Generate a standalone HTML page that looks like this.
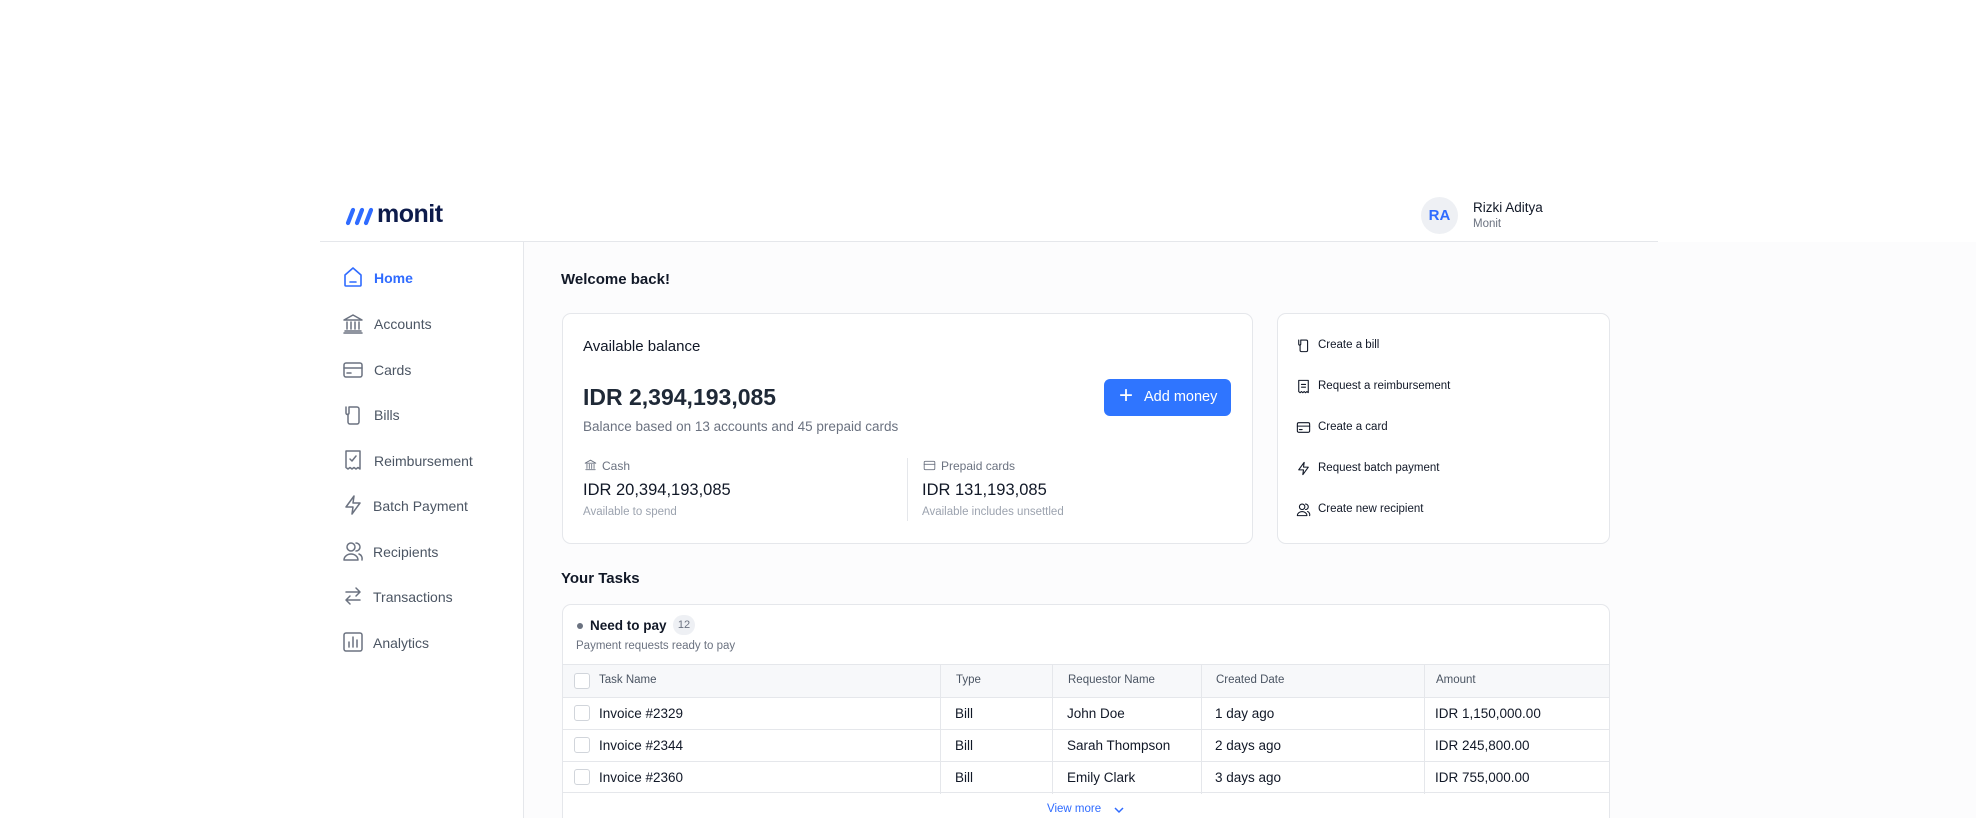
<!DOCTYPE html>
<html style="width:1976px;height:818px;overflow:hidden"><head><meta charset="utf-8"><style>
*{box-sizing:border-box;margin:0;padding:0}
body{width:1976px;height:818px;overflow:hidden;background:#fff;font-family:"Liberation Sans",sans-serif;color:#111827;position:relative}
.a{position:absolute;white-space:nowrap}
.nav{font-size:14px;color:#4b5563}
.g{color:#6b7280}
.card{position:absolute;border:1px solid #e5e7eb;border-radius:9px;background:#fff}
svg{position:absolute}
.ic{fill:none;stroke:#6b7280;stroke-width:1.5;stroke-linecap:round;stroke-linejoin:round}
.qi{fill:none;stroke:#111827;stroke-width:1.6;stroke-linecap:round;stroke-linejoin:round}
.cb{position:absolute;width:16px;height:16px;border:1px solid #d1d5db;border-radius:3px;background:#fff}
.row{position:absolute;left:0;width:1048px;height:32px;border-top:1px solid #e5e7eb;font-size:13.5px}
.row span{position:absolute;top:8px}
</style></head><body>
<div class="a" style="left:523px;top:242px;width:1453px;height:576px;background:#fcfcfd"></div>
<div class="a" style="left:320px;top:241px;width:1338px;height:1px;background:#e5e7eb"></div>
<div class="a" style="left:523px;top:242px;width:1px;height:576px;background:#e5e7eb"></div>
<svg style="left:345px;top:206px" width="30" height="20" viewBox="0 0 30 20"><g stroke="#2f6bff" stroke-width="4.2" stroke-linecap="round"><path d="M3 17 L8 4"/><path d="M12 17 L17 4"/><path d="M21 17 L26 4"/></g></svg>
<div class="a" style="left:377px;top:200px;font-size:25px;font-weight:bold;color:#0d1b4b;letter-spacing:-0.5px">monit</div>
<div class="a" style="left:1421px;top:197px;width:37px;height:37px;border-radius:50%;background:#eef0f4;color:#2f6bff;font-weight:bold;font-size:15px;text-align:center;line-height:37px">RA</div>
<div class="a" style="left:1473px;top:200px;font-size:13.5px;color:#111827">Rizki Aditya</div>
<div class="a" style="left:1473px;top:218px;font-size:11.5px"><span class="g">Monit</span></div>
<svg style="left:342px;top:266px" width="22" height="22" viewBox="0 0 22 22"><path d="M3 9 L11 2 L19 9 V19 a1 1 0 0 1-1 1 H4 a1 1 0 0 1-1-1Z M8 16 H14" fill="none" stroke="#2f6bff" stroke-width="1.6" stroke-linejoin="round" stroke-linecap="round"/></svg>
<div class="a nav" style="left:374px;top:270px;color:#2f6bff;font-weight:bold">Home</div>
<svg style="left:342px;top:313px" width="22" height="22" viewBox="0 0 22 22"><path class="ic" d="M2 7 L11 2 L20 7 Z M3 7H19 M5 9V16 M9 9V16 M13 9V16 M17 9V16 M3 18H19 M2 20H20"/></svg>
<div class="a nav" style="left:374px;top:316px">Accounts</div>
<svg style="left:342px;top:359px" width="22" height="22" viewBox="0 0 22 22"><rect class="ic" x="2" y="4" width="18" height="14" rx="2"/><path class="ic" d="M2 9H20 M5 14H9"/></svg>
<div class="a nav" style="left:374px;top:362px">Cards</div>
<svg style="left:342px;top:404px" width="22" height="22" viewBox="0 0 22 22"><path class="ic" d="M7 3 H15 a2 2 0 0 1 2 2 V18 a2 2 0 0 1-2 2 H8 a2 2 0 0 1-2-2 V10 M4 3 V9 a1.5 1.5 0 0 0 3 0 V3"/></svg>
<div class="a nav" style="left:374px;top:407px">Bills</div>
<svg style="left:342px;top:449px" width="22" height="22" viewBox="0 0 22 22"><path class="ic" d="M4 2 H18 V20 L16 18.5 L14 20 L12 18.5 L10 20 L8 18.5 L6 20 L4 18.5Z M8 10 L10 12 L14 7"/></svg>
<div class="a nav" style="left:374px;top:453px">Reimbursement</div>
<svg style="left:342px;top:494px" width="22" height="22" viewBox="0 0 22 22"><path class="ic" d="M12 2 L4 13 H11 L10 20 L18 9 H11 Z"/></svg>
<div class="a nav" style="left:373px;top:498px">Batch Payment</div>
<svg style="left:342px;top:540px" width="22" height="22" viewBox="0 0 22 22"><circle class="ic" cx="9" cy="7" r="4"/><path class="ic" d="M2 20 a7 6 0 0 1 14 0 Z M14 3 a4 4 0 0 1 0 8 M17 14 a5 5 0 0 1 3 6"/></svg>
<div class="a nav" style="left:373px;top:544px">Recipients</div>
<svg style="left:342px;top:585px" width="22" height="22" viewBox="0 0 22 22"><path class="ic" d="M4 7 H18 M14 3 L18 7 L14 11 M18 15 H4 M8 11 L4 15 L8 19"/></svg>
<div class="a nav" style="left:373px;top:589px">Transactions</div>
<svg style="left:342px;top:631px" width="22" height="22" viewBox="0 0 22 22"><rect class="ic" x="2" y="2" width="18" height="18" rx="2"/><path class="ic" d="M7 16V11 M11 16V6 M15 16V9"/></svg>
<div class="a nav" style="left:373px;top:635px">Analytics</div>
<div class="a" style="left:561px;top:271px;font-size:15px;font-weight:bold;color:#111827">Welcome back!</div>
<div class="card" style="left:562px;top:313px;width:691px;height:231px"></div>
<div class="a" style="left:583px;top:338px;font-size:15px">Available balance</div>
<div class="a" style="left:583px;top:384px;font-size:23px;font-weight:bold;color:#1f2937">IDR 2,394,193,085</div>
<div class="a g" style="left:583px;top:419px;font-size:13.5px">Balance based on 13 accounts and 45 prepaid cards</div>
<div class="a" style="left:1104px;top:379px;width:127px;height:37px;border-radius:6px;background:#2f75ff;color:#fff;font-size:14.5px;line-height:37px;padding-left:40px">Add money</div>
<div class="a" style="left:1119px;top:377px;color:#fff;font-size:24px;line-height:37px">+</div>
<svg style="left:584px;top:459px" width="13" height="13" viewBox="0 0 22 22"><path class="ic" d="M2 7 L11 2 L20 7 Z M5 9V16 M9 9V16 M13 9V16 M17 9V16 M3 18H19"/></svg>
<div class="a g" style="left:602px;top:459px;font-size:12px">Cash</div>
<div class="a" style="left:583px;top:481px;font-size:16.5px">IDR 20,394,193,085</div>
<div class="a" style="left:583px;top:506px;font-size:11.5px;color:#9ca3af">Available to spend</div>
<div class="a" style="left:907px;top:458px;width:1px;height:63px;background:#e5e7eb"></div>
<svg style="left:923px;top:459px" width="13" height="13" viewBox="0 0 22 22"><rect class="ic" x="2" y="4" width="18" height="14" rx="2"/><path class="ic" d="M2 9H20"/></svg>
<div class="a g" style="left:941px;top:459px;font-size:12px">Prepaid cards</div>
<div class="a" style="left:922px;top:481px;font-size:16.5px">IDR 131,193,085</div>
<div class="a" style="left:922px;top:506px;font-size:11.5px;color:#9ca3af">Available includes unsettled</div>
<div class="card" style="left:1277px;top:313px;width:333px;height:231px"></div>
<svg style="left:1296px;top:338px" width="15" height="15" viewBox="0 0 22 22"><path class="qi" d="M7 3 H15 a2 2 0 0 1 2 2 V18 a2 2 0 0 1-2 2 H8 a2 2 0 0 1-2-2 V10 M4 3 V9 a1.5 1.5 0 0 0 3 0 V3"/></svg>
<div class="a" style="left:1318px;top:339px;font-size:11.5px">Create a bill</div>
<svg style="left:1296px;top:379px" width="15" height="15" viewBox="0 0 22 22"><path class="qi" d="M4 2 H18 V20 L16 18.5 L14 20 L12 18.5 L10 20 L8 18.5 L6 20 L4 18.5Z M8 8H14 M8 12H14"/></svg>
<div class="a" style="left:1318px;top:380px;font-size:11.5px">Request a reimbursement</div>
<svg style="left:1296px;top:420px" width="15" height="15" viewBox="0 0 22 22"><rect class="qi" x="2" y="4" width="18" height="14" rx="2"/><path class="qi" d="M2 9H20 M5 14H9"/></svg>
<div class="a" style="left:1318px;top:421px;font-size:11.5px">Create a card</div>
<svg style="left:1296px;top:461px" width="15" height="15" viewBox="0 0 22 22"><path class="qi" d="M12 2 L4 13 H11 L10 20 L18 9 H11 Z"/></svg>
<div class="a" style="left:1318px;top:462px;font-size:11.5px">Request batch payment</div>
<svg style="left:1296px;top:502px" width="15" height="15" viewBox="0 0 22 22"><circle class="qi" cx="9" cy="7" r="4"/><path class="qi" d="M2 20 a7 6 0 0 1 14 0 Z M14 3 a4 4 0 0 1 0 8 M17 14 a5 5 0 0 1 3 6"/></svg>
<div class="a" style="left:1318px;top:503px;font-size:11.5px">Create new recipient</div>
<div class="a" style="left:561px;top:570px;font-size:15px;font-weight:bold">Your Tasks</div>
<div class="card" style="left:562px;top:604px;width:1048px;height:214px;overflow:hidden;border-bottom:none;border-radius:9px 9px 0 0">
  <div class="a" style="left:14px;top:18px;width:6px;height:6px;border-radius:50%;background:#6b7280"></div>
  <div class="a" style="left:27px;top:13px;font-size:13.5px;font-weight:bold">Need to pay</div>
  <div class="a" style="left:110px;top:10px;width:22px;height:20px;border-radius:10px;background:#eef0f4;color:#6b7280;font-size:11px;text-align:center;line-height:20px">12</div>
  <div class="a" style="left:13px;top:35px;font-size:11.5px;color:#6b7280">Payment requests ready to pay</div>
  <div class="a" style="left:0;top:59px;width:1048px;height:33px;background:#f7f8fa;border-top:1px solid #e5e7eb"></div>
  <div class="cb" style="left:11px;top:68px"></div>
  <div class="a" style="left:36px;top:69px;font-size:11.5px;color:#4b5563">Task Name</div>
  <div class="a" style="left:393px;top:69px;font-size:11.5px;color:#4b5563">Type</div>
  <div class="a" style="left:505px;top:69px;font-size:11.5px;color:#4b5563">Requestor Name</div>
  <div class="a" style="left:653px;top:69px;font-size:11.5px;color:#4b5563">Created Date</div>
  <div class="a" style="left:873px;top:69px;font-size:11.5px;color:#4b5563">Amount</div>
  <div class="row" style="top:92px"><div class="cb" style="left:11px;top:7px"></div><span style="left:36px">Invoice #2329</span><span style="left:392px">Bill</span><span style="left:504px">John Doe</span><span style="left:652px">1 day ago</span><span style="left:872px">IDR 1,150,000.00</span></div>
  <div class="row" style="top:124px"><div class="cb" style="left:11px;top:7px"></div><span style="left:36px">Invoice #2344</span><span style="left:392px">Bill</span><span style="left:504px">Sarah Thompson</span><span style="left:652px">2 days ago</span><span style="left:872px">IDR 245,800.00</span></div>
  <div class="row" style="top:156px;border-bottom:1px solid #e5e7eb"><div class="cb" style="left:11px;top:7px"></div><span style="left:36px">Invoice #2360</span><span style="left:392px">Bill</span><span style="left:504px">Emily Clark</span><span style="left:652px">3 days ago</span><span style="left:872px">IDR 755,000.00</span></div>
  <div class="a" style="left:377px;top:59px;width:1px;height:130px;background:#e5e7eb"></div>
  <div class="a" style="left:489px;top:59px;width:1px;height:130px;background:#e5e7eb"></div>
  <div class="a" style="left:638px;top:59px;width:1px;height:130px;background:#e5e7eb"></div>
  <div class="a" style="left:861px;top:59px;width:1px;height:130px;background:#e5e7eb"></div>
  <div class="a" style="left:484px;top:198px;font-size:11.5px;color:#2f6bff">View more</div>
  <svg style="left:551px;top:201px" width="10" height="8" viewBox="0 0 10 8"><path d="M1 2 L5 6 L9 2" fill="none" stroke="#2f6bff" stroke-width="1.5"/></svg>
</div>
</body></html>
